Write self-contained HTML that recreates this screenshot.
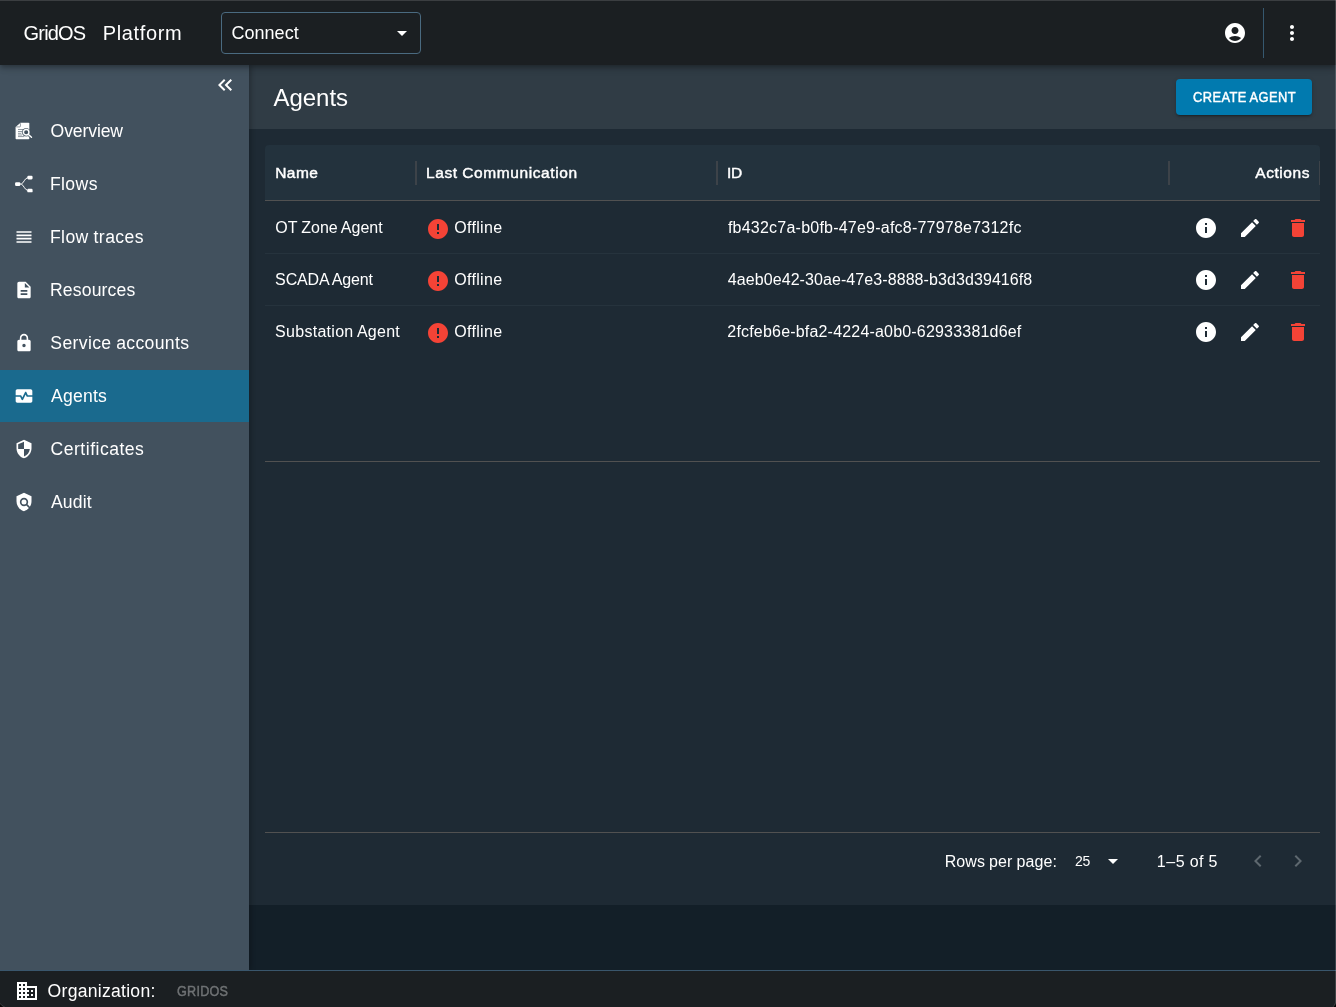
<!DOCTYPE html>
<html lang="en">
<head>
<meta charset="utf-8">
<title>GridOS Platform - Agents</title>
<style>
*{box-sizing:border-box;margin:0;padding:0}
html,body{width:1336px;height:1007px;overflow:hidden;background:#131f28}
body{font-family:"Liberation Sans",sans-serif;color:#fff;position:relative}
.abs{position:absolute}
.t{position:absolute;white-space:nowrap;line-height:1;word-spacing:-0.03em}
#txt{position:absolute;left:0;top:0;width:1336px;height:1007px;will-change:transform}
svg{position:absolute;display:block;overflow:visible}
#topbar{left:0;top:0;width:1336px;height:65px;background:#1b1f22;box-shadow:0 2px 4px -1px rgba(0,0,0,.2),0 4px 5px 0 rgba(0,0,0,.14),0 1px 10px 0 rgba(0,0,0,.12)}
#topline{left:0;top:0;width:1336px;height:1px;background:rgba(255,255,255,.14)}
#rightline{left:1335px;top:0;width:1px;height:1003px;background:rgba(255,255,255,.17)}
#select{left:221px;top:12px;width:200px;height:42px;border:1px solid #4a6a80;border-radius:4px}
#vdiv{left:1263px;top:8px;width:1px;height:50px;background:#36586f}
#sidebar{left:0;top:65px;width:249px;height:905px;background:#42515e;box-shadow:2px 0 5px rgba(0,0,0,.24)}
#active{left:0;top:370px;width:249px;height:52px;background:#1a6a8e}
#pagehead{left:249px;top:65px;width:1087px;height:64px;background:#303c45}
#content{left:249px;top:129px;width:1087px;height:776px;background:#1e2a34}
#thead{left:265px;top:145px;width:1055px;height:55px;background:#23323d;border-radius:4px 4px 0 0}
#clip{left:265px;top:145px;width:1055px;height:56px;overflow:hidden}
.hl{position:absolute;left:265px;width:1055px;height:1px}
.sep{position:absolute;top:161px;width:2px;height:24px;background:#3d4349}
#btn{left:1176px;top:79px;width:136px;height:36px;background:#017aaf;border-radius:4px;box-shadow:0 3px 1px -2px rgba(0,0,0,.2),0 2px 2px 0 rgba(0,0,0,.14),0 1px 5px 0 rgba(0,0,0,.12)}
#bottombar{left:0;top:970px;width:1336px;height:37px;background:#1b1f22;border-top:1px solid #3a566c}
</style>
</head>
<body>
<section class="abs" id="pagehead" aria-label="Page header"></section>
<main class="abs" id="content"></main>
<div class="abs" id="thead"></div>
<div class="abs" id="clip">
<div class="sep" style="left:150px;top:16px"></div>
<div class="sep" style="left:451px;top:16px"></div>
<div class="sep" style="left:903px;top:16px"></div>
<div class="sep" style="left:1054px;top:16px"></div>
</div>
<div class="hl" style="top:200px;background:#515151"></div>
<div class="hl" style="top:253px;background:#26333d"></div>
<div class="hl" style="top:305px;background:#26333d"></div>
<div class="hl" style="top:461px;background:#515151"></div>
<div class="hl" style="top:832px;background:#515151"></div>
<div class="abs" id="btn"></div>
<svg style="left:426px;top:217px" width="24" height="24" viewBox="0 0 24 24" fill="#f44336"><path fill-rule="evenodd" d="M12 2C6.48 2 2 6.48 2 12s4.48 10 10 10 10-4.48 10-10S17.52 2 12 2zm1 15h-2v-2h2v2zm0-4h-2V7h2v6z"/></svg>
<svg style="left:1194px;top:216px" width="24" height="24" viewBox="0 0 24 24" fill="#fff"><path fill-rule="evenodd" d="M12 2C6.48 2 2 6.48 2 12s4.48 10 10 10 10-4.48 10-10S17.52 2 12 2zm1 15h-2v-6h2v6zm0-8h-2V7h2v2z"/></svg>
<svg style="left:1238px;top:216px" width="24" height="24" viewBox="0 0 24 24" fill="#fff"><path fill-rule="evenodd" d="M3 17.25V21h3.75L17.81 9.94l-3.75-3.75L3 17.25zM20.71 7.04c.39-.39.39-1.02 0-1.41l-2.34-2.34c-.39-.39-1.02-.39-1.41 0l-1.83 1.83 3.75 3.75 1.83-1.83z"/></svg>
<svg style="left:1286px;top:216px" width="24" height="24" viewBox="0 0 24 24" fill="#f44336"><path fill-rule="evenodd" d="M6 19c0 1.1.9 2 2 2h8c1.1 0 2-.9 2-2V7H6v12zM19 4h-3.5l-1-1h-5l-1 1H5v2h14V4z"/></svg>
<svg style="left:426px;top:269px" width="24" height="24" viewBox="0 0 24 24" fill="#f44336"><path fill-rule="evenodd" d="M12 2C6.48 2 2 6.48 2 12s4.48 10 10 10 10-4.48 10-10S17.52 2 12 2zm1 15h-2v-2h2v2zm0-4h-2V7h2v6z"/></svg>
<svg style="left:1194px;top:268px" width="24" height="24" viewBox="0 0 24 24" fill="#fff"><path fill-rule="evenodd" d="M12 2C6.48 2 2 6.48 2 12s4.48 10 10 10 10-4.48 10-10S17.52 2 12 2zm1 15h-2v-6h2v6zm0-8h-2V7h2v2z"/></svg>
<svg style="left:1238px;top:268px" width="24" height="24" viewBox="0 0 24 24" fill="#fff"><path fill-rule="evenodd" d="M3 17.25V21h3.75L17.81 9.94l-3.75-3.75L3 17.25zM20.71 7.04c.39-.39.39-1.02 0-1.41l-2.34-2.34c-.39-.39-1.02-.39-1.41 0l-1.83 1.83 3.75 3.75 1.83-1.83z"/></svg>
<svg style="left:1286px;top:268px" width="24" height="24" viewBox="0 0 24 24" fill="#f44336"><path fill-rule="evenodd" d="M6 19c0 1.1.9 2 2 2h8c1.1 0 2-.9 2-2V7H6v12zM19 4h-3.5l-1-1h-5l-1 1H5v2h14V4z"/></svg>
<svg style="left:426px;top:321px" width="24" height="24" viewBox="0 0 24 24" fill="#f44336"><path fill-rule="evenodd" d="M12 2C6.48 2 2 6.48 2 12s4.48 10 10 10 10-4.48 10-10S17.52 2 12 2zm1 15h-2v-2h2v2zm0-4h-2V7h2v6z"/></svg>
<svg style="left:1194px;top:320px" width="24" height="24" viewBox="0 0 24 24" fill="#fff"><path fill-rule="evenodd" d="M12 2C6.48 2 2 6.48 2 12s4.48 10 10 10 10-4.48 10-10S17.52 2 12 2zm1 15h-2v-6h2v6zm0-8h-2V7h2v2z"/></svg>
<svg style="left:1238px;top:320px" width="24" height="24" viewBox="0 0 24 24" fill="#fff"><path fill-rule="evenodd" d="M3 17.25V21h3.75L17.81 9.94l-3.75-3.75L3 17.25zM20.71 7.04c.39-.39.39-1.02 0-1.41l-2.34-2.34c-.39-.39-1.02-.39-1.41 0l-1.83 1.83 3.75 3.75 1.83-1.83z"/></svg>
<svg style="left:1286px;top:320px" width="24" height="24" viewBox="0 0 24 24" fill="#f44336"><path fill-rule="evenodd" d="M6 19c0 1.1.9 2 2 2h8c1.1 0 2-.9 2-2V7H6v12zM19 4h-3.5l-1-1h-5l-1 1H5v2h14V4z"/></svg>
<svg style="left:1101px;top:849px" width="24" height="24" viewBox="0 0 24 24" fill="#fff"><path fill-rule="evenodd" d="M7 10l5 5 5-5z"/></svg>
<svg style="left:1246px;top:849px" width="24" height="24" viewBox="0 0 24 24" fill="#5e686f"><path fill-rule="evenodd" d="M15.41 16.59L10.83 12l4.58-4.59L14 6l-6 6 6 6 1.41-1.41z"/></svg>
<svg style="left:1286px;top:849px" width="24" height="24" viewBox="0 0 24 24" fill="#5e686f"><path fill-rule="evenodd" d="M8.59 16.59L13.17 12 8.59 7.41 10 6l6 6-6 6-1.41-1.41z"/></svg>
<nav class="abs" id="sidebar" aria-label="Main navigation"></nav>
<div class="abs" id="active"></div>
<svg style="left:213px;top:73px" width="24" height="24" viewBox="0 0 24 24" fill="#fff"><path fill-rule="evenodd" d="M17.59 18 19 16.59 14.42 12 19 7.41 17.59 6l-6 6zM11 18l1.41-1.41L7.83 12l4.58-4.59L11 6l-6 6z"/></svg>
<svg style="left:14px;top:121px" width="20" height="20" viewBox="0 0 24 24"><path fill="#fff" d="M7.800 2H17.400a1 1 0 0 1 1 1V21a1 1 0 0 1-1 1H2.900a1 1 0 0 1-1-1V7.200z"/><path d="M7.700 2.600v3.500a1 1 0 0 1-1 1H2.700" fill="none" stroke="#42515e" stroke-width=".9" opacity=".75"/><path d="M4.800 10.200h7M4.800 12.600h5M4.800 14.800h4M4.800 16.800h5M4.800 18.700h7.500" stroke="#42515e" stroke-width="1" opacity=".7" fill="none"/><circle cx="14.600" cy="13.400" r="5.100" fill="#42515e" opacity=".85"/><path d="M17.400 16.400l3.600 3.200" stroke="#42515e" stroke-width="3.400" stroke-linecap="round" opacity=".85"/><circle cx="14.600" cy="13.400" r="3.300" fill="#42515e" stroke="#fff" stroke-width="1.700"/><path d="M17.300 16.200l3.700 3.300" stroke="#fff" stroke-width="1.700" stroke-linecap="round"/></svg>
<svg style="left:14px;top:174px" width="20" height="20" viewBox="0 0 24 24"><g fill="#fff"><rect x="1.300" y="9.800" width="6.300" height="4.600" rx="1.400"/><rect x="16" y="2.100" width="6.300" height="4.400" rx="1.400"/><rect x="16" y="17.700" width="6.300" height="4.300" rx="1.400"/></g><path d="M7 12.100h2M8.800 12.100C11.600 11 12.600 5.200 16.600 4.300M8.800 12.100C11.600 13.200 12.600 18.900 16.600 19.800" stroke="#fff" stroke-width="1.150" fill="none"/></svg>
<svg style="left:14px;top:227px" width="20" height="20" viewBox="0 0 24 24" fill="#fff"><path fill-rule="evenodd" d="M3 15h18v-2H3v2zm0 4h18v-2H3v2zm0-8h18V9H3v2zm0-6v2h18V5H3z"/></svg>
<svg style="left:14px;top:280px" width="20" height="20" viewBox="0 0 24 24" fill="#fff"><path fill-rule="evenodd" d="M14 2H6c-1.1 0-1.99.9-1.99 2L4 20c0 1.1.89 2 1.99 2H18c1.1 0 2-.9 2-2V8l-6-6zm2 16H8v-2h8v2zm0-4H8v-2h8v2zm-3-5V3.5L18.5 9H13z"/></svg>
<svg style="left:14px;top:333px" width="20" height="20" viewBox="0 0 24 24" fill="#fff"><path fill-rule="evenodd" d="M18 8h-1V6c0-2.76-2.24-5-5-5S7 3.24 7 6v2H6c-1.1 0-2 .9-2 2v10c0 1.1.9 2 2 2h12c1.1 0 2-.9 2-2V10c0-1.1-.9-2-2-2zm-6 9c-1.1 0-2-.9-2-2s.9-2 2-2 2 .9 2 2-.9 2-2 2zm3.1-9H8.9V6c0-1.71 1.39-3.1 3.1-3.1 1.71 0 3.1 1.39 3.1 3.1v2z"/></svg>
<svg style="left:14px;top:386px" width="20" height="20" viewBox="0 0 24 24" fill="#fff"><path fill-rule="evenodd" d="M15.11 12.45 14 10.24l-3.11 6.21c-.16.34-.51.55-.89.55s-.73-.21-.89-.55L7.38 13H2v5c0 1.1.9 2 2 2h16c1.1 0 2-.9 2-2v-5h-6c-.38 0-.73-.21-.89-.55zM20 4H4c-1.1 0-2 .9-2 2v5h6c.38 0 .73.21.89.55L10 13.76l3.11-6.21c.34-.68 1.45-.68 1.79 0L16.62 11H22V6c0-1.1-.9-2-2-2z"/></svg>
<svg style="left:14px;top:439px" width="20" height="20" viewBox="0 0 24 24" fill="#fff"><path fill-rule="evenodd" d="M12 1L3 5v6c0 5.55 3.84 10.74 9 12 5.16-1.26 9-6.45 9-12V5l-9-4zm0 10.99h7c-.53 4.12-3.28 7.79-7 8.94V12H5V6.3l7-3.11v8.8z"/></svg>
<svg style="left:14px;top:492px" width="20" height="20" viewBox="0 0 24 24" fill="#fff"><path fill-rule="evenodd" d="M21 5l-9-4-9 4v6c0 5.55 3.84 10.74 9 12 2.3-.56 4.33-1.9 5.88-3.71l-3.12-3.12c-1.94 1.29-4.58 1.07-6.29-.64-1.95-1.95-1.95-5.12 0-7.07 1.95-1.95 5.12-1.95 7.07 0 1.71 1.71 1.92 4.35.64 6.29l2.9 2.9C20.29 15.69 21 13.38 21 11V5zM12 9a3 3 0 1 0 0 6 3 3 0 0 0 0-6z"/></svg>
<header class="abs" id="topbar"></header>
<div class="abs" id="topline"></div>
<div class="abs" id="select"></div>
<svg style="left:390px;top:20.5px" width="24" height="24" viewBox="0 0 24 24" fill="#fff"><path fill-rule="evenodd" d="M7 10l5 5 5-5z"/></svg>
<svg style="left:1223px;top:21px" width="24" height="24" viewBox="0 0 24 24" fill="#fff"><path fill-rule="evenodd" d="M12 2C6.48 2 2 6.48 2 12s4.48 10 10 10 10-4.48 10-10S17.52 2 12 2zm0 4c1.93 0 3.5 1.57 3.5 3.5S13.93 13 12 13s-3.5-1.57-3.5-3.5S10.07 6 12 6zm0 14c-2.03 0-4.43-.82-6.14-2.88C7.55 15.8 9.68 15 12 15s4.45.8 6.14 2.12C16.43 19.18 14.03 20 12 20z"/></svg>
<div class="abs" id="vdiv"></div>
<svg style="left:1280px;top:21px" width="24" height="24" viewBox="0 0 24 24" fill="#fff"><path fill-rule="evenodd" d="M12 8c1.1 0 2-.9 2-2s-.9-2-2-2-2 .9-2 2 .9 2 2 2zm0 2c-1.1 0-2 .9-2 2s.9 2 2 2 2-.9 2-2-.9-2-2-2zm0 6c-1.1 0-2 .9-2 2s.9 2 2 2 2-.9 2-2-.9-2-2-2z"/></svg>
<footer class="abs" id="bottombar"></footer>
<svg style="left:15px;top:979px" width="24" height="24" viewBox="0 0 24 24" fill="#fff"><path fill-rule="evenodd" d="M12 7V3H2v18h20V7H12zM6 19H4v-2h2v2zm0-4H4v-2h2v2zm0-4H4V9h2v2zm0-4H4V5h2v2zm4 12H8v-2h2v2zm0-4H8v-2h2v2zm0-4H8V9h2v2zm0-4H8V5h2v2zm10 12h-8v-2h2v-2h-2v-2h2v-2h-2V9h8v10zm-2-8h-2v2h2v-2zm0 4h-2v2h2v-2z"/></svg>
<div class="abs" id="rightline"></div>
<svg style="left:0;top:999px" width="8" height="8" viewBox="0 0 8 8"><path d="M0 4.6Q1.2 7 4.4 8H0z" fill="#050505"/><path d="M0 4.2Q1.4 6.8 4.8 8" fill="none" stroke="#3a3d40" stroke-width="1"/></svg>
<svg style="left:1328px;top:999px" width="8" height="8" viewBox="0 0 8 8"><path d="M8 4.2Q7.4 6.6 5.4 8H8z" fill="#050505"/><path d="M7.6 3.6Q7 6.4 4.6 8" fill="none" stroke="#3f4245" stroke-width="1"/></svg>
<div id="txt">
<h1 class="t" style="left:273.42px;top:86px;font-size:24px;letter-spacing:-0.02px;color:#fff;font-weight:normal">Agents</h1>
<span class="t" style="left:1192.76px;top:90px;font-size:14px;letter-spacing:0.435px;color:#fff;-webkit-text-stroke:0.45px #fff;transform-origin:0 0;transform:scaleX(0.92)">CREATE AGENT</span>
<div class="t" style="left:275.15px;top:165px;font-size:15.5px;letter-spacing:0.472px;color:#fff;-webkit-text-stroke:0.45px #fff">Name</div>
<div class="t" style="left:426.05px;top:165px;font-size:15.5px;letter-spacing:0.601px;color:#fff;-webkit-text-stroke:0.45px #fff">Last Communication</div>
<div class="t" style="left:727.11px;top:165px;font-size:15.5px;letter-spacing:-0.3px;color:#fff;-webkit-text-stroke:0.45px #fff">ID</div>
<div class="t" style="left:1255.27px;top:165px;font-size:15.5px;letter-spacing:0.563px;color:#fff;-webkit-text-stroke:0.45px #fff">Actions</div>
<div class="t" style="left:275.23px;top:220px;font-size:16px;letter-spacing:0.018px;color:#fff">OT Zone Agent</div>
<div class="t" style="left:454.13px;top:220px;font-size:16px;letter-spacing:0.348px;color:#fff">Offline</div>
<div class="t" style="left:727.93px;top:220px;font-size:16px;letter-spacing:0.227px;color:#fff">fb432c7a-b0fb-47e9-afc8-77978e7312fc</div>
<div class="t" style="left:275.1px;top:272px;font-size:16px;letter-spacing:-0.125px;color:#fff">SCADA Agent</div>
<div class="t" style="left:454.13px;top:272px;font-size:16px;letter-spacing:0.348px;color:#fff">Offline</div>
<div class="t" style="left:727.77px;top:272px;font-size:16px;letter-spacing:0.082px;color:#fff">4aeb0e42-30ae-47e3-8888-b3d3d39416f8</div>
<div class="t" style="left:275.1px;top:324px;font-size:16px;letter-spacing:0.281px;color:#fff">Substation Agent</div>
<div class="t" style="left:454.13px;top:324px;font-size:16px;letter-spacing:0.348px;color:#fff">Offline</div>
<div class="t" style="left:727.33px;top:324px;font-size:16px;letter-spacing:0.188px;color:#fff">2fcfeb6e-bfa2-4224-a0b0-62933381d6ef</div>
<span class="t" style="left:944.64px;top:854px;font-size:16px;letter-spacing:0.097px;color:#fff">Rows per page:</span>
<span class="t" style="left:1075.03px;top:854px;font-size:14px;letter-spacing:-0.206px;color:#fff">25</span>
<span class="t" style="left:1156.85px;top:854px;font-size:16px;letter-spacing:0.534px;color:#fff">1–5 of 5</span>
<div class="t" style="left:50.59px;top:123px;font-size:17.6px;letter-spacing:-0.122px;color:#fff">Overview</div>
<div class="t" style="left:49.9px;top:176px;font-size:17.6px;letter-spacing:0.407px;color:#fff">Flows</div>
<div class="t" style="left:49.9px;top:229px;font-size:17.6px;letter-spacing:0.426px;color:#fff">Flow traces</div>
<div class="t" style="left:49.9px;top:282px;font-size:17.6px;letter-spacing:0.166px;color:#fff">Resources</div>
<div class="t" style="left:50.37px;top:335px;font-size:17.6px;letter-spacing:0.348px;color:#fff">Service accounts</div>
<div class="t" style="left:50.94px;top:388px;font-size:17.6px;letter-spacing:0.222px;color:#fff">Agents</div>
<div class="t" style="left:50.54px;top:441px;font-size:17.6px;letter-spacing:0.49px;color:#fff">Certificates</div>
<div class="t" style="left:50.94px;top:494px;font-size:17.6px;letter-spacing:0.167px;color:#fff">Audit</div>
<div class="t" style="left:23.51px;top:23px;font-size:20px;letter-spacing:-0.795px;color:#fff">GridOS</div>
<div class="t" style="left:102.68px;top:23px;font-size:20px;letter-spacing:0.639px;color:#fff">Platform</div>
<div class="t" style="left:231.51px;top:24px;font-size:18px;letter-spacing:0.021px;color:#fff">Connect</div>
<div class="t" style="left:47.59px;top:983px;font-size:17.6px;letter-spacing:0.26px;color:#fff">Organization:</div>
<span class="t" style="left:177.17px;top:984px;font-size:14px;letter-spacing:0.273px;color:#6f7274;-webkit-text-stroke:0.45px #6f7274;transform-origin:0 0;transform:scaleX(0.9)">GRIDOS</span>
</div>
</body>
</html>
